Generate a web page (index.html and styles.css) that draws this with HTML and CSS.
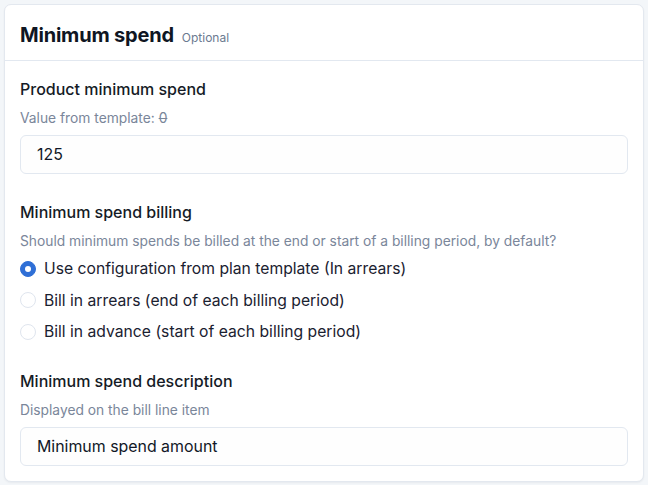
FILE: index.html
```html
<!DOCTYPE html>
<html>
<head>
<meta charset="utf-8">
<link rel="stylesheet" href="styles.css">
</head>
<body>
<div class="card">
  <div class="card-header">
    <h2 class="title">Minimum spend</h2>
    <span class="optional">Optional</span>
  </div>
  <div class="card-body">
    <div class="field">
      <div class="label">Product minimum spend</div>
      <div class="hint">Value from template: <s>0</s></div>
      <div class="input">125</div>
    </div>
    <div class="field">
      <div class="label">Minimum spend billing</div>
      <div class="hint">Should minimum spends be billed at the end or start of a billing period, by default?</div>
      <div class="radios">
        <label class="radio"><span class="dot checked"></span>Use configuration from plan template (In arrears)</label>
        <label class="radio"><span class="dot"></span>Bill in arrears (end of each billing period)</label>
        <label class="radio"><span class="dot"></span>Bill in advance (start of each billing period)</label>
      </div>
    </div>
    <div class="field">
      <div class="label">Minimum spend description</div>
      <div class="hint">Displayed on the bill line item</div>
      <div class="input">Minimum spend amount</div>
    </div>
  </div>
</div>
</body>
</html>
```
FILE: styles.css
```css
* { box-sizing: border-box; }
html, body { margin: 0; padding: 0; }
body {
  background: #f3f6f9;
  font-family: Inter, "Noto Sans", sans-serif;
  color: #111827;
  padding: 4px;
}
.card {
  background: #fff;
  border: 1px solid #e3e8ef;
  border-radius: 7px;
  height: 478px;
  box-shadow: 0 1px 2px rgba(16,24,40,0.05);
}
.card-header {
  display: flex;
  align-items: baseline;
  gap: 8px;
  padding: 18px 15px 0 15px;
  height: 56px;
  border-bottom: 1px solid #e2e8f0;
}
.title {
  margin: 0;
  font-size: 20px;
  font-weight: 700;
  letter-spacing: -0.2px;
  color: #0f1623;
}
.optional {
  font-size: 12px;
  color: #6b7a90;
}
.card-body {
  padding: 17px 15px 0 15px;
  display: flex;
  flex-direction: column;
  gap: 27px;
}
.field { display: flex; flex-direction: column; }
.label {
  font-size: 16px;
  font-weight: 500;
  color: #151b26;
  line-height: 22px;
}
.hint {
  font-size: 13.8px;
  color: #7a869a;
  margin-top: 9px;
  line-height: 18px;
}
.hint s { text-decoration-thickness: 1px; }
.input {
  margin-top: 8px;
  height: 39px;
  border: 1px solid #e2e8f0;
  border-radius: 6px;
  padding: 0 16px;
  display: flex;
  align-items: center;
  font-size: 15.9px;
  color: #111827;
  background: #fefefe;
}
.radios {
  margin-top: 3px;
  margin-bottom: -5px;
  display: flex;
  flex-direction: column;
}
.radio {
  display: flex;
  align-items: center;
  gap: 8px;
  height: 31.5px;
  font-size: 15.7px;
  color: #1a2130;
}
.dot {
  width: 16px;
  height: 16px;
  border-radius: 50%;
  border: 1px solid #dfe5ee;
  background: #fff;
  flex: none;
  position: relative;
}
.dot.checked {
  background: #2f6fd6;
  border-color: #2f6fd6;
}
.dot.checked::after {
  content: "";
  position: absolute;
  left: 4px; top: 4px;
  width: 6px; height: 6px;
  border-radius: 50%;
  background: #fff;
}
```
